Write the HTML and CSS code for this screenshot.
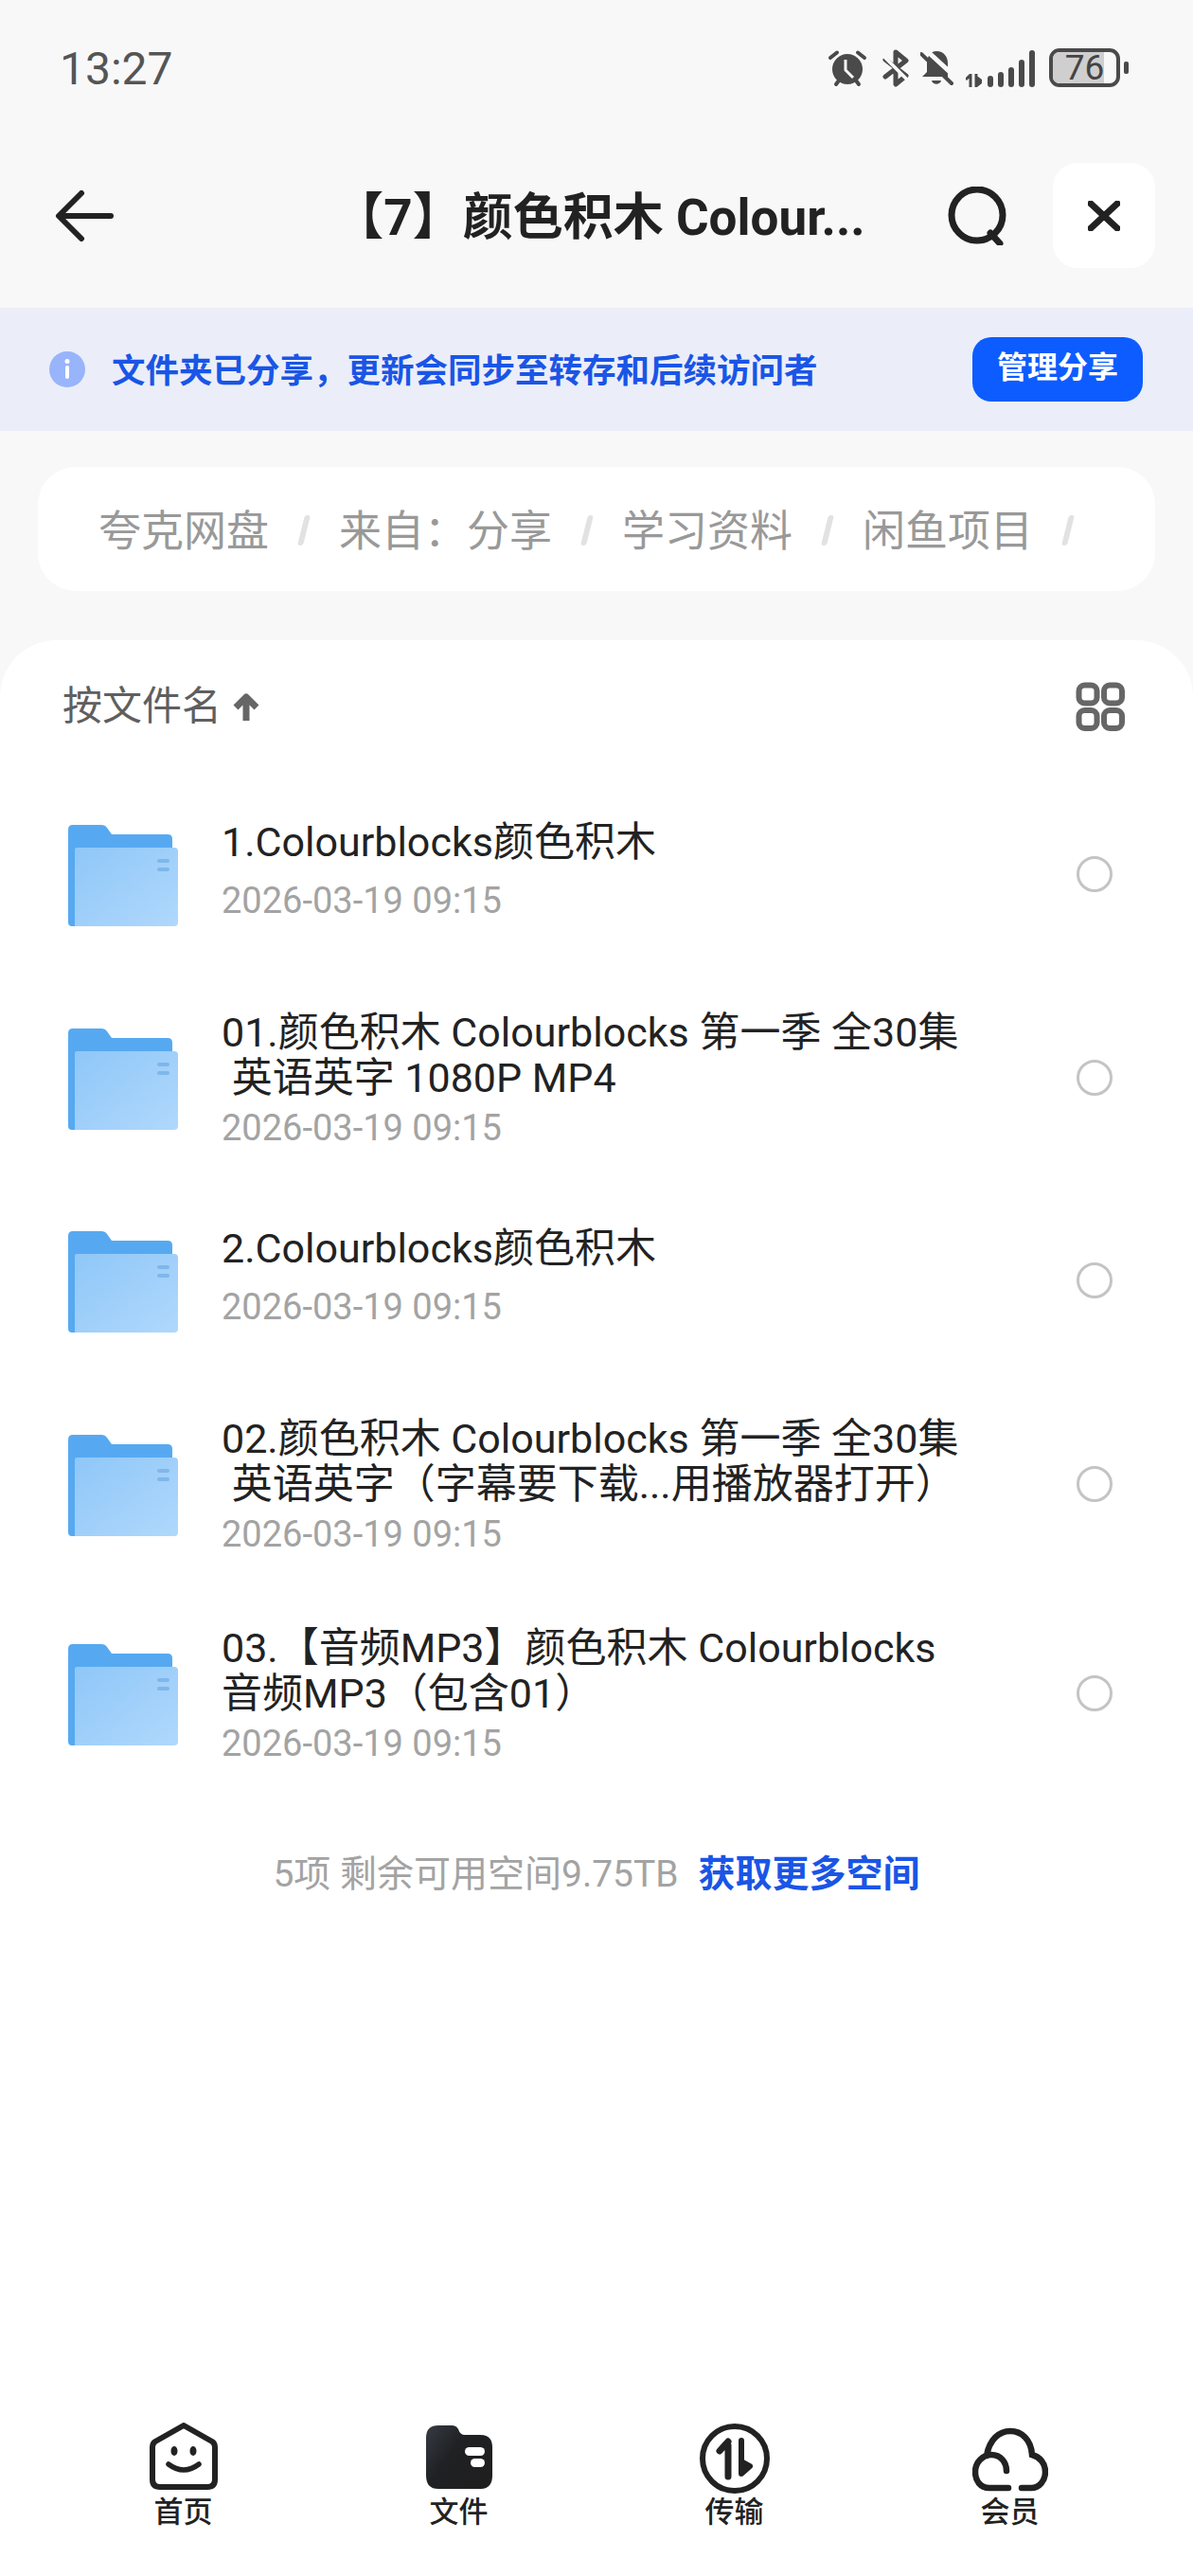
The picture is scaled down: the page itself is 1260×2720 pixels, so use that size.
FILE: index.html
```html
<!DOCTYPE html>
<html lang="zh-CN">
<head>
  <meta charset="UTF-8">
  <title>文件</title>
  <link rel="stylesheet" href="styles.css">
</head>
<body>
<div class="phone">

  <div class="status-bar">
    <span class="time">13:27</span>
    <div class="status-icons">
      <svg class="ic-alarm" width="42" height="40" viewBox="0 0 42 40">
        <circle cx="21" cy="21" r="16" fill="#4a4a4a"/>
        <path d="M3 9 L10 3.500 M39 9 L32 3.500 M9 37 L12 33 M33 37 L30 33" stroke="#4a4a4a" stroke-width="4" stroke-linecap="round" fill="none"/>
        <path d="M19 11 V22 L27 30" stroke="#f8f8f9" stroke-width="3" fill="none"/>
      </svg>
      <svg class="ic-bt" width="28" height="40" viewBox="0 0 28 40">
        <path d="M3 11 L25 28 L14 37 V3 L25 12 L3 29" stroke="#4a4a4a" stroke-width="5" stroke-linejoin="round" stroke-linecap="round" fill="none"/>
        <path d="M0 6 L28 34" stroke="#f8f8f9" stroke-width="3.500"/>
      </svg>
      <svg class="ic-bell" width="36" height="40" viewBox="0 0 36 40">
        <path d="M17 2 C25 2 29 8 29 15 V29 L2 29 L7 24 V15 C7 8 11 2 17 2 Z" fill="#4a4a4a"/>
        <path d="M12 33 H22 C21 38 13 38 12 33 Z" fill="#4a4a4a"/>
        <path d="M5 0 L40 32" stroke="#f8f8f9" stroke-width="5"/>
        <path d="M1 5 L33 36" stroke="#4a4a4a" stroke-width="4" stroke-linecap="round"/>
      </svg>
      <div class="signal">
        <svg width="17" height="14" viewBox="0 0 17 14">
          <path d="M5 0 V14 M0 6 L4 2 M11 0 V14 M12 12 L17 8 L12 4 Z" stroke="#4a4a4a" stroke-width="3" fill="#4a4a4a"/>
        </svg>
        <i class="bar b1"></i><i class="bar b2"></i><i class="bar b3"></i><i class="bar b4"></i><i class="bar b5"></i>
      </div>
      <div class="battery">
        <div class="battery-body"><span class="battery-fill"></span><span class="battery-num">76</span></div>
        <i class="battery-nub"></i>
      </div>
    </div>
  </div>

  <div class="title-bar">
    <svg class="ic-back" width="62" height="54" viewBox="0 0 62 54">
      <path d="M28 3 L4 27 L28 51 M5 27 H59" stroke="#222" stroke-width="6" stroke-linecap="round" stroke-linejoin="round" fill="none"/>
    </svg>
    <h1 class="title">【7】颜色积木 Colour...</h1>
    <svg class="ic-search" width="64" height="62" viewBox="0 0 64 62">
      <circle cx="31" cy="30" r="27" stroke="#222" stroke-width="7" fill="none"/>
      <path d="M45 49 L55 60" stroke="#222" stroke-width="7" stroke-linecap="round"/>
    </svg>
    <div class="close-btn">
      <svg width="34" height="32" viewBox="0 0 34 32">
        <path d="M3 3 L31 29 M31 3 L3 29" stroke="#222" stroke-width="7" stroke-linecap="round"/>
      </svg>
    </div>
  </div>

  <div class="banner">
    <svg class="ic-info" width="38" height="38" viewBox="0 0 38 38">
      <circle cx="19" cy="19" r="19" fill="#98b4fb"/>
      <circle cx="19" cy="10.500" r="2.500" fill="#fff"/>
      <rect x="17" y="15" width="4" height="14" rx="2" fill="#fff"/>
    </svg>
    <span class="banner-text">文件夹已分享，更新会同步至转存和后续访问者</span>
    <span class="banner-btn">管理分享</span>
  </div>

  <div class="crumbs">
    <span>夸克网盘</span><i class="sep"></i>
    <span>来自：分享</span><i class="sep"></i>
    <span>学习资料</span><i class="sep"></i>
    <span>闲鱼项目</span><i class="sep"></i>
  </div>

  <div class="sheet">
    <div class="sort-row">
      <span class="sort-label">按文件名</span>
      <svg class="ic-up" width="28" height="32" viewBox="0 0 28 32">
        <path d="M14 31 V6 M3 17 L14 6 L25 17" stroke="#666" stroke-width="7" stroke-linejoin="round" fill="none"/>
      </svg>
      <svg class="ic-grid" width="52" height="52" viewBox="0 0 52 52">
        <rect x="3.500" y="3.500" width="19" height="19" rx="6" stroke="#666" stroke-width="6" fill="none"/>
        <rect x="30" y="3.500" width="19" height="19" rx="6" stroke="#666" stroke-width="6" fill="none"/>
        <rect x="3.500" y="30" width="19" height="19" rx="6" stroke="#666" stroke-width="6" fill="none"/>
        <rect x="30" y="30" width="19" height="19" rx="6" stroke="#666" stroke-width="6" fill="none"/>
      </svg>
    </div>

    <svg width="0" height="0" class="defs">
      <defs>
        <linearGradient id="folderFront" x1="0" y1="0" x2="1" y2="1">
          <stop offset="0" stop-color="#8fc7f8"/>
          <stop offset="1" stop-color="#b0d8fc"/>
        </linearGradient>
        <symbol id="folder" viewBox="0 0 116 108">
          <path d="M5 0 H35 Q39 0 41 3 L46 10 H105 Q110 10 110 15 V107 H4 Q0 107 0 103 V5 Q0 0 5 0 Z" fill="#56a9f1"/>
          <path d="M9 24 H112 Q116 24 116 28 V103 Q116 107 112 107 H7 V26 Q7 24 9 24 Z" fill="url(#folderFront)"/>
          <rect x="94" y="36" width="13" height="4" rx="2" fill="#7fb7ea"/>
          <rect x="94" y="45" width="13" height="4" rx="2" fill="#7fb7ea"/>
        </symbol>
      </defs>
    </svg>

    <div class="file-list">
      <div class="file-row">
        <svg class="folder"><use href="#folder"/></svg>
        <div class="file-info">
          <div class="file-name">1.Colourblocks颜色积木</div>
          <div class="file-date wide">2026-03-19 09:15</div>
        </div>
        <i class="radio"></i>
      </div>
      <div class="file-row">
        <svg class="folder"><use href="#folder"/></svg>
        <div class="file-info">
          <div class="file-name">01.颜色积木 Colourblocks 第一季 全30集<br>&nbsp;英语英字 1080P MP4</div>
          <div class="file-date">2026-03-19 09:15</div>
        </div>
        <i class="radio"></i>
      </div>
      <div class="file-row">
        <svg class="folder"><use href="#folder"/></svg>
        <div class="file-info">
          <div class="file-name">2.Colourblocks颜色积木</div>
          <div class="file-date wide">2026-03-19 09:15</div>
        </div>
        <i class="radio"></i>
      </div>
      <div class="file-row">
        <svg class="folder"><use href="#folder"/></svg>
        <div class="file-info">
          <div class="file-name">02.颜色积木 Colourblocks 第一季 全30集<br>&nbsp;英语英字（字幕要下载...用播放器打开）</div>
          <div class="file-date">2026-03-19 09:15</div>
        </div>
        <i class="radio"></i>
      </div>
      <div class="file-row">
        <svg class="folder"><use href="#folder"/></svg>
        <div class="file-info">
          <div class="file-name">03.【音频MP3】颜色积木 Colourblocks<br>音频MP3（包含01）</div>
          <div class="file-date">2026-03-19 09:15</div>
        </div>
        <i class="radio"></i>
      </div>
    </div>

    <div class="summary">
      <span>5项 剩余可用空间9.75TB</span>
      <span class="summary-link">获取更多空间</span>
    </div>

    <nav class="tab-bar">
      <div class="tab">
        <svg width="80" height="76" viewBox="-4 1 80 76">
          <path d="M36 4 L66 21 Q69 23 69 27 V61 Q69 69 61 69 H11 Q3 69 3 61 V27 Q3 23 6 21 Z" stroke="#222" stroke-width="6" stroke-linejoin="round" fill="none"/>
          <ellipse cx="26" cy="31" rx="3.500" ry="5" fill="#222"/>
          <ellipse cx="46" cy="31" rx="3.500" ry="5" fill="#222"/>
          <path d="M20 45 Q36 57 52 45" stroke="#222" stroke-width="5.500" stroke-linecap="round" fill="none"/>
        </svg>
        <span>首页</span>
      </div>
      <div class="tab">
        <svg width="80" height="76" viewBox="-4 0 80 76">
          <defs>
            <linearGradient id="tabFolder" x1="0" y1="0" x2="1" y2="0.700">
              <stop offset="0" stop-color="#363b43"/>
              <stop offset="0.450" stop-color="#202124"/>
              <stop offset="1" stop-color="#1f1f1f"/>
            </linearGradient>
          </defs>
          <path d="M14 3 H28 Q33 3 35 7 Q37 13 42 13 H58 Q71 13 71 26 V56 Q71 70 58 70 H14 Q1 70 1 56 V16 Q1 3 14 3 Z" fill="url(#tabFolder)"/>
          <rect x="42" y="26" width="21" height="9" rx="4.500" fill="#fff"/>
          <rect x="48" y="38" width="15" height="9" rx="4.500" fill="#fff"/>
        </svg>
        <span>文件</span>
      </div>
      <div class="tab">
        <svg width="80" height="76" viewBox="0 0 80 76">
          <circle cx="40" cy="38" r="34" stroke="#222" stroke-width="6" fill="none"/>
          <path d="M33 57 V24 M33 20 L24 30" stroke="#222" stroke-width="7" stroke-linecap="round" stroke-linejoin="round" fill="none"/>
          <path d="M47 19 V52 M47 54 L56 46 L47 41 Z" stroke="#222" stroke-width="6" stroke-linecap="round" stroke-linejoin="round" fill="#222"/>
        </svg>
        <span>传输</span>
      </div>
      <div class="tab">
        <svg width="80" height="76" viewBox="0 -5 80 76">
          <path d="M38 64 H18 C8 64 3 56 3 47 C3 37 11 29 20 29 C30 29 36 37 36 46 M52 64 H62 C71 64 77 56 77 47 C77 38 71 31 63 29 C62 13 52 4 40 4 C28 4 18 13 15 30" stroke="#222" stroke-width="6.500" stroke-linecap="round" fill="none"/>
        </svg>
        <span>会员</span>
      </div>
    </nav>
  </div>

</div>
</body>
</html>
```

FILE: styles.css
```css
* {
  box-sizing: border-box;
  margin: 0;
  padding: 0;
}
body {
  width: 1260px;
  height: 2720px;
  background-color: #f8f8f9;
  font-family: "Roboto", "Noto Sans CJK SC", sans-serif;
  overflow: hidden;
}
i {
  display: block;
}
svg {
  display: block;
  flex-shrink: 0;
}
.phone {
  height: 2720px;
  display: flex;
  flex-direction: column;
}

/* status bar */
.status-bar {
  height: 130px;
  padding: 50px 68px 0 63px;
  display: flex;
  justify-content: space-between;
  align-items: flex-start;
}
.time {
  font-size: 48px;
  line-height: 46px;
  color: #555;
}
.status-icons {
  display: flex;
  align-items: flex-end;
  margin-top: 2px;
  height: 40px;
}
.ic-bt {
  margin-left: 16px;
}
.ic-bell {
  margin-left: 12px;
}
.signal {
  display: flex;
  align-items: flex-end;
  gap: 5px;
  margin-left: 12px;
}
.signal svg {
  margin-right: 1px;
}
.bar {
  width: 6px;
  background-color: #4a4a4a;
  border-radius: 3px;
}
.b1 { height: 12px; }
.b2 { height: 16px; }
.b3 { height: 21px; }
.b4 { height: 29px; }
.b5 { height: 39px; }
.battery {
  display: flex;
  align-items: center;
  margin-left: 15px;
}
.battery-body {
  width: 75px;
  height: 41px;
  border: 4px solid #4a4a4a;
  border-radius: 11px;
  position: relative;
  overflow: hidden;
  text-align: center;
  font-size: 37px;
  line-height: 33px;
  color: #444;
}
.battery-fill {
  position: absolute;
  left: 0;
  top: 0;
  bottom: 0;
  width: 54px;
  background-color: #cfcfcf;
}
.battery-num {
  position: relative;
}
.battery-nub {
  width: 5px;
  height: 13px;
  margin-left: 4px;
  background-color: #4a4a4a;
  border-radius: 2px;
}

/* title bar */
.title-bar {
  height: 195px;
  padding: 0 40px 0 58px;
  display: flex;
  align-items: center;
}
.title {
  flex: 1;
  text-align: center;
  font-size: 53px;
  font-weight: 700;
  color: #222;
  white-space: nowrap;
  margin-bottom: 5px;
  padding-left: 170px;
  padding-right: 25px;
}
.close-btn {
  width: 108px;
  height: 111px;
  margin-left: 47px;
  background-color: #fff;
  border-radius: 26px;
  display: flex;
  align-items: center;
  justify-content: center;
}

/* share banner */
.banner {
  height: 130px;
  background-color: #ebeef8;
  padding: 0 53px 0 52px;
  display: flex;
  align-items: center;
}
.banner-text {
  flex: 1;
  margin-left: 28px;
  margin-bottom: 3px;
  font-size: 35.500px;
  font-weight: 700;
  color: #1a55e6;
}
.banner-btn {
  width: 180px;
  height: 68px;
  line-height: 64px;
  text-align: center;
  background-color: #0d5cff;
  border-radius: 20px;
  color: #fff;
  font-size: 32px;
  font-weight: 700;
}

/* breadcrumb */
.crumbs {
  height: 131px;
  margin: 38px 40px 0;
  padding: 0 0 3px 64px;
  background-color: #fff;
  border-radius: 40px;
  display: flex;
  align-items: center;
  font-size: 45px;
  color: #999;
}
.sep {
  width: 6px;
  height: 32px;
  margin: 6px 34px 0;
  background-color: #e2e2e2;
  transform: skewX(-14deg);
  border-radius: 3px;
}

/* list sheet */
.sheet {
  flex: 1;
  margin-top: 52px;
  background-color: #fff;
  border-radius: 60px 60px 0 0;
  display: flex;
  flex-direction: column;
}
.defs {
  position: absolute;
}
.sort-row {
  height: 70px;
  margin-top: 35px;
  padding: 0 72px 0 66px;
  display: flex;
  align-items: center;
  color: #5f5f5f;
  font-size: 42px;
}
.sort-label {
  line-height: 70px;
}
.ic-up {
  margin-left: 12px;
}
.ic-grid {
  margin-left: auto;
}
.file-list {
  margin-top: 35px;
}
.file-row {
  height: 214.500px;
  padding: 0 85px 0 72px;
  display: flex;
  align-items: center;
}
.file-row:last-child {
  margin-top: 7px;
}
.folder {
  width: 116px;
  height: 108px;
  margin-top: 4px;
}
.file-info {
  flex: 1;
  margin-left: 46px;
}
.file-name {
  font-size: 43px;
  line-height: 48px;
  color: #222;
  white-space: nowrap;
}
.file-date {
  margin-top: 5px;
  margin-bottom: -5px;
  font-size: 38px;
  line-height: 48px;
  color: #a3a3a3;
}
.file-date.wide {
  margin-top: 14px;
  margin-bottom: 7px;
}
.radio {
  width: 38px;
  height: 38px;
  border: 3px solid #c4c4c4;
  border-radius: 50%;
}
.summary {
  margin-top: 58px;
  display: flex;
  justify-content: center;
  gap: 21px;
  font-size: 39px;
  line-height: 50px;
  color: #a3a3a3;
}
.summary-link {
  color: #1a55e6;
  font-weight: 700;
}

/* bottom tabs */
.tab-bar {
  margin-top: auto;
  height: 162px;
  padding: 0 48px;
  display: grid;
  grid-template-columns: repeat(4, 291px);
}
.tab {
  height: 112px;
  display: flex;
  flex-direction: column;
  align-items: center;
  font-size: 31px;
  font-weight: 500;
  line-height: 38px;
  color: #222;
}
```
